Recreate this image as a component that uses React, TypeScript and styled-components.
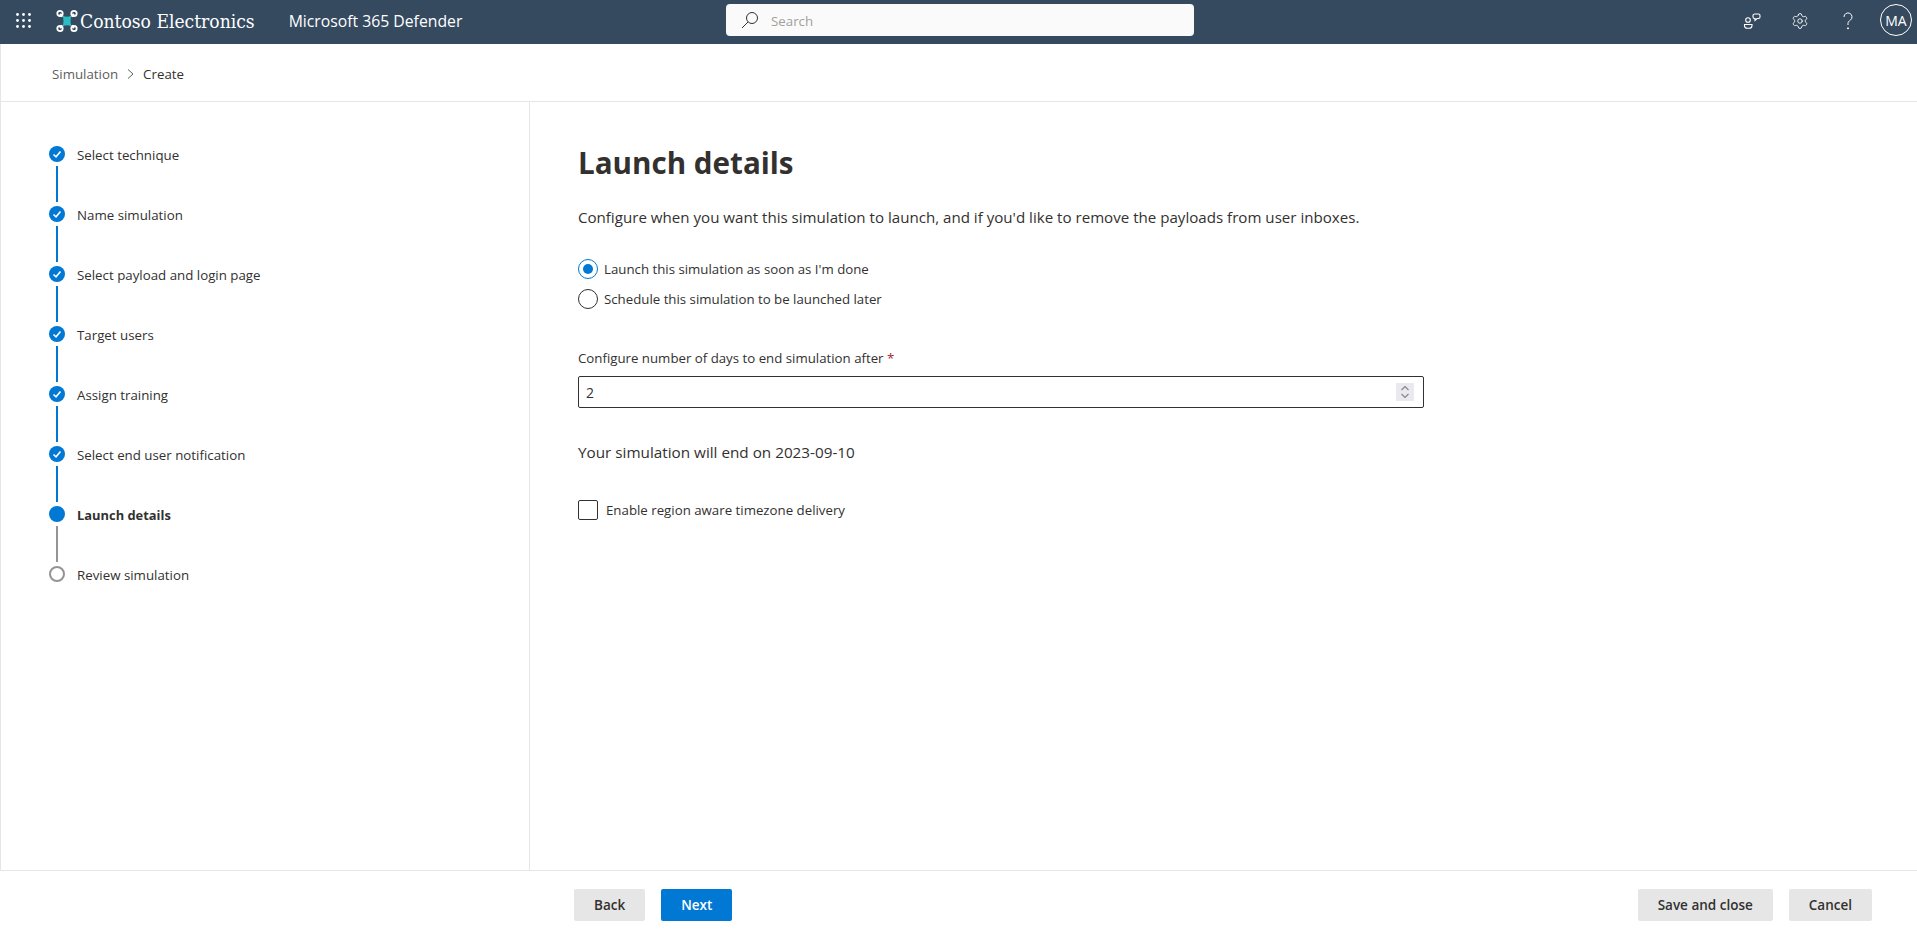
import { createGlobalStyle } from 'styled-components';
import styled from 'styled-components';
import { Settings } from 'lucide-react';

const GlobalStyle = createGlobalStyle`
  html, body {
    margin: 0;
    padding: 0;
    height: 100%;
    background: white;
    font-family: "Open Sans", "Noto Sans", sans-serif;
    color: #323130;
  }
  #root {
    height: 100%;
  }
  * {
    box-sizing: border-box;
  }
`;

const Page = styled.div`
  width: 1917px;
  height: 935px;
  display: flex;
  flex-direction: column;
  overflow: hidden;
`;

const Header = styled.header`
  height: 44px;
  flex-shrink: 0;
  padding-bottom: 2px;
  background: #354a5f;
  display: grid;
  grid-template-columns: 726px 1fr 210px;
  align-items: center;
  color: white;
`;

const HeaderLeft = styled.div`
  display: flex;
  align-items: center;
  padding-left: 16px;
`;

const Waffle = styled.svg`
  width: 16px;
  height: 16px;
  margin-right: 24px;
`;

const LogoText = styled.span`
  font-family: "DejaVu Serif", "Liberation Serif", serif;
  font-stretch: condensed;
  font-size: 19.1px;
  margin-left: 2px;
`;

const ProductName = styled.span`
  font-size: 15.75px;
  font-weight: 500;
  margin-left: 34px;
`;

const SearchBox = styled.div`
  width: 468px;
  height: 32px;
  margin-bottom: 2px;
  background: #fafafa;
  border-radius: 4px;
  display: flex;
  align-items: center;
  padding-left: 15px;
  gap: 12px;
  color: #a19f9d;
  font-size: 13.3px;
`;

const SearchHint = styled.span`
  padding-top: 2px;
`;

const HeaderRight = styled.div`
  display: flex;
  align-items: center;
  justify-content: flex-end;
  padding-right: 5px;
`;

const HeaderIcon = styled.button`
  width: 48px;
  height: 42px;
  padding: 0;
  background: none;
  border: 0;
  display: flex;
  align-items: center;
  justify-content: center;
  color: white;
`;

const Avatar = styled.div`
  width: 32px;
  height: 32px;
  margin: 0 0 2px 8px;
  border: 1px solid white;
  border-radius: 50%;
  display: flex;
  align-items: center;
  justify-content: center;
  font-size: 14px;
`;

const BreadcrumbBar = styled.nav`
  height: 58px;
  flex-shrink: 0;
  display: flex;
  align-items: center;
  padding: 2px 0 0 51px;
  gap: 8px;
  font-size: 13.3px;
  border-left: 1px solid #e6e6e6;
  border-bottom: 1px solid #e6e6e6;
`;

const Crumb = styled.span<{ $current?: boolean }>`
  color: ${(p) => (p.$current ? '#323130' : '#605e5c')};
`;

const Main = styled.div`
  flex: 1;
  display: flex;
  min-height: 0;
  border-left: 1px solid #e6e6e6;
`;

const Sidebar = styled.aside`
  width: 529px;
  flex-shrink: 0;
  padding: 44px 0 0 48px;
  border-right: 1px solid #e6e6e6;
`;

const StepRow = styled.div`
  display: flex;
  gap: 12px;
`;

const StepTrack = styled.div`
  width: 16px;
  display: flex;
  flex-direction: column;
  align-items: center;
`;

const StepDot = styled.div<{ $state: Step['state'] }>`
  width: 16px;
  height: 16px;
  border-radius: 50%;
  display: flex;
  align-items: center;
  justify-content: center;
  background: ${(p) => (p.$state === 'todo' ? 'white' : '#0078d4')};
  border: ${(p) => (p.$state === 'todo' ? '2px solid #949494' : '0')};
`;

const StepLine = styled.div<{ $done: boolean }>`
  width: 2px;
  height: 36px;
  margin: 4px 0;
  background: ${(p) => (p.$done ? '#0078d4' : '#949494')};
`;

const StepLabel = styled.span<{ $current: boolean }>`
  padding-top: 1px;
  font-size: ${(p) => (p.$current ? '12.9px' : '13.3px')};
  line-height: 16px;
  font-weight: ${(p) => (p.$current ? 700 : 400)};
  color: #323130;
`;

const Content = styled.main`
  flex: 1;
  padding: 39px 0 0 48px;
`;

const Title = styled.h1`
  margin: 0 0 21px;
  font-size: 29.6px;
  line-height: 44px;
  font-weight: 700;
  color: #323130;
`;

const Description = styled.p`
  margin: 0 0 26px;
  font-size: 15.12px;
  line-height: 22px;
`;

const RadioRow = styled.label`
  height: 30px;
  display: flex;
  align-items: center;
  gap: 6px;
  font-size: 13.25px;
`;

const RadioMark = styled.span<{ $checked?: boolean }>`
  width: 20px;
  height: 20px;
  border-radius: 50%;
  display: flex;
  align-items: center;
  justify-content: center;
  border: 1px solid ${(p) => (p.$checked ? '#0078d4' : '#323130')};

  &::after {
    content: '';
    width: 10px;
    height: 10px;
    border-radius: 50%;
    background: ${(p) => (p.$checked ? '#0078d4' : 'transparent')};
  }
`;

const FieldLabel = styled.div`
  margin-top: 34px;
  font-size: 13.25px;
  line-height: 20px;
`;

const Required = styled.span`
  color: #a4262c;
`;

const NumberField = styled.div`
  width: 846px;
  height: 32px;
  margin-top: 8px;
  padding: 0 9px 0 7px;
  border: 1px solid #323130;
  border-radius: 2px;
  display: flex;
  align-items: center;
  justify-content: space-between;
  font-size: 14px;
`;

const Spinner = styled.div`
  width: 18px;
  height: 18px;
  background: #e9e9ef;
  display: flex;
  align-items: center;
  justify-content: center;
`;

const EndDate = styled.p`
  margin: 33px 0 0;
  font-size: 15.27px;
  line-height: 22px;
`;

const CheckRow = styled.label`
  margin-top: 37px;
  display: flex;
  align-items: center;
  gap: 8px;
  font-size: 13.27px;
`;

const CheckMark = styled.span`
  width: 20px;
  height: 20px;
  border: 1px solid #323130;
  border-radius: 2px;
`;

const Footer = styled.footer`
  height: 65px;
  flex-shrink: 0;
  padding: 3px 45px 0 574px;
  display: flex;
  align-items: center;
  justify-content: space-between;
  border-top: 1px solid #e6e6e6;
`;

const ButtonGroup = styled.div`
  display: flex;
  gap: 16px;
`;

const Button = styled.button<{ $primary?: boolean }>`
  height: 32px;
  min-width: 71px;
  padding: 0 20px;
  border: 0;
  border-radius: 2px;
  font-family: inherit;
  font-size: 13.5px;
  font-weight: 600;
  background: ${(p) => (p.$primary ? '#0078d4' : '#e6e6e6')};
  color: ${(p) => (p.$primary ? 'white' : '#323130')};
`;

type Step = {
  label: string;
  state: 'done' | 'current' | 'todo';
};

const steps: Step[] = [
  { label: 'Select technique', state: 'done' },
  { label: 'Name simulation', state: 'done' },
  { label: 'Select payload and login page', state: 'done' },
  { label: 'Target users', state: 'done' },
  { label: 'Assign training', state: 'done' },
  { label: 'Select end user notification', state: 'done' },
  { label: 'Launch details', state: 'current' },
  { label: 'Review simulation', state: 'todo' },
];

const DroneLogo = () => (
  <svg width="22" height="24" viewBox="0 0 22 24" fill="none">
    <path d="M6.500 7.500 L4 5 M15.500 7.500 L18 5 M6.500 16.500 L4 19 M15.500 16.500 L18 19" stroke="white" strokeWidth="2.400" />
    <circle cx="4" cy="4.500" r="2.700" stroke="white" strokeWidth="1.800" />
    <circle cx="18" cy="4.500" r="2.700" stroke="white" strokeWidth="1.800" />
    <circle cx="4" cy="19.500" r="2.700" stroke="white" strokeWidth="1.800" />
    <circle cx="18" cy="19.500" r="2.700" stroke="white" strokeWidth="1.800" />
    <path d="M6.500 6.500 Q11 9 15.500 6.500 Q13.500 12 15.500 17.500 Q11 15 6.500 17.500 Q8.500 12 6.500 6.500 Z" fill="#2bbcc4" />
  </svg>
);

const App = () => {
  return (
    <Page>
      <GlobalStyle />
      <Header>
        <HeaderLeft>
          <Waffle viewBox="0 0 16 16" fill="white">
            {[1, 7, 13].flatMap((y) =>
              [1, 7, 13].map((x) => <circle key={`${x}-${y}`} cx={x + 0.5} cy={y + 0.5} r="1.400" />),
            )}
          </Waffle>
          <DroneLogo />
          <LogoText>Contoso Electronics</LogoText>
          <ProductName>Microsoft 365 Defender</ProductName>
        </HeaderLeft>
        <SearchBox>
          <svg width="18" height="18" viewBox="0 0 18 18" fill="none" stroke="#323130" strokeWidth="1">
            <circle cx="11" cy="7" r="5.500" />
            <path d="M7 11 L1 17" />
          </svg>
          <SearchHint>Search</SearchHint>
        </SearchBox>
        <HeaderRight>
          <HeaderIcon aria-label="Community">
            <svg width="18" height="18" viewBox="0 0 18 18" fill="none" stroke="white" strokeWidth="1.100">
              <circle cx="5" cy="8" r="2.300" />
              <path d="M1.500 12.500 h7.500 v1 a2.800 2.800 0 0 1 -2.800 2.800 h-1.900 a2.800 2.800 0 0 1 -2.800 -2.800 Z" />
              <path d="M11 2 h4.500 a1.500 1.500 0 0 1 1.500 1.500 v1.500 a1.500 1.500 0 0 1 -1.500 1.500 h-1.500 l-2 2 v-2 h-.5 a1.500 1.500 0 0 1 -1.500 -1.500 v-1.500 a1.500 1.500 0 0 1 1.500 -1.500 Z" />
            </svg>
          </HeaderIcon>
          <HeaderIcon aria-label="Settings">
            <Settings size={18} strokeWidth={1.200} color="white" />
          </HeaderIcon>
          <HeaderIcon aria-label="Help">
            <svg width="18" height="18" viewBox="0 0 18 18" fill="none" stroke="white" strokeWidth="1">
              <path d="M5 5 a4 4 0 1 1 6.300 3.200 c-1.400 1 -2.300 1.700 -2.300 3.300 v1.500" />
              <circle cx="9" cy="16.300" r="0.600" fill="white" />
            </svg>
          </HeaderIcon>
          <Avatar>MA</Avatar>
        </HeaderRight>
      </Header>

      <BreadcrumbBar>
        <Crumb>Simulation</Crumb>
        <svg width="9" height="10" viewBox="0 0 9 10" fill="none" stroke="#605e5c" strokeWidth="1">
          <path d="M2 0.500 L7 5 L2 9.500" />
        </svg>
        <Crumb $current>Create</Crumb>
      </BreadcrumbBar>

      <Main>
        <Sidebar>
          {steps.map((step, i) => (
            <StepRow key={step.label}>
              <StepTrack>
                <StepDot $state={step.state}>
                  {step.state === 'done' && (
                    <svg width="10" height="10" viewBox="0 0 10 10" fill="none" stroke="white" strokeWidth="1.600">
                      <path d="M1.500 5.500 L4 7.800 L8.500 2.500" />
                    </svg>
                  )}
                </StepDot>
                {i < steps.length - 1 && <StepLine $done={step.state === 'done'} />}
              </StepTrack>
              <StepLabel $current={step.state === 'current'}>{step.label}</StepLabel>
            </StepRow>
          ))}
        </Sidebar>

        <Content>
          <Title>Launch details</Title>
          <Description>
            Configure when you want this simulation to launch, and if you'd like to remove the payloads from user inboxes.
          </Description>
          <RadioRow>
            <RadioMark $checked />
            Launch this simulation as soon as I'm done
          </RadioRow>
          <RadioRow>
            <RadioMark />
            Schedule this simulation to be launched later
          </RadioRow>
          <FieldLabel>
            Configure number of days to end simulation after <Required>*</Required>
          </FieldLabel>
          <NumberField>
            2
            <Spinner>
              <svg width="12" height="14" viewBox="0 0 12 14" fill="none" stroke="#8a8886" strokeWidth="1.200">
                <path d="M2.500 5 L6 1.500 L9.500 5 M2.500 9 L6 12.500 L9.500 9" />
              </svg>
            </Spinner>
          </NumberField>
          <EndDate>Your simulation will end on 2023-09-10</EndDate>
          <CheckRow>
            <CheckMark />
            Enable region aware timezone delivery
          </CheckRow>
        </Content>
      </Main>

      <Footer>
        <ButtonGroup>
          <Button>Back</Button>
          <Button $primary>Next</Button>
        </ButtonGroup>
        <ButtonGroup>
          <Button>Save and close</Button>
          <Button>Cancel</Button>
        </ButtonGroup>
      </Footer>
    </Page>
  );
};

export default App;
